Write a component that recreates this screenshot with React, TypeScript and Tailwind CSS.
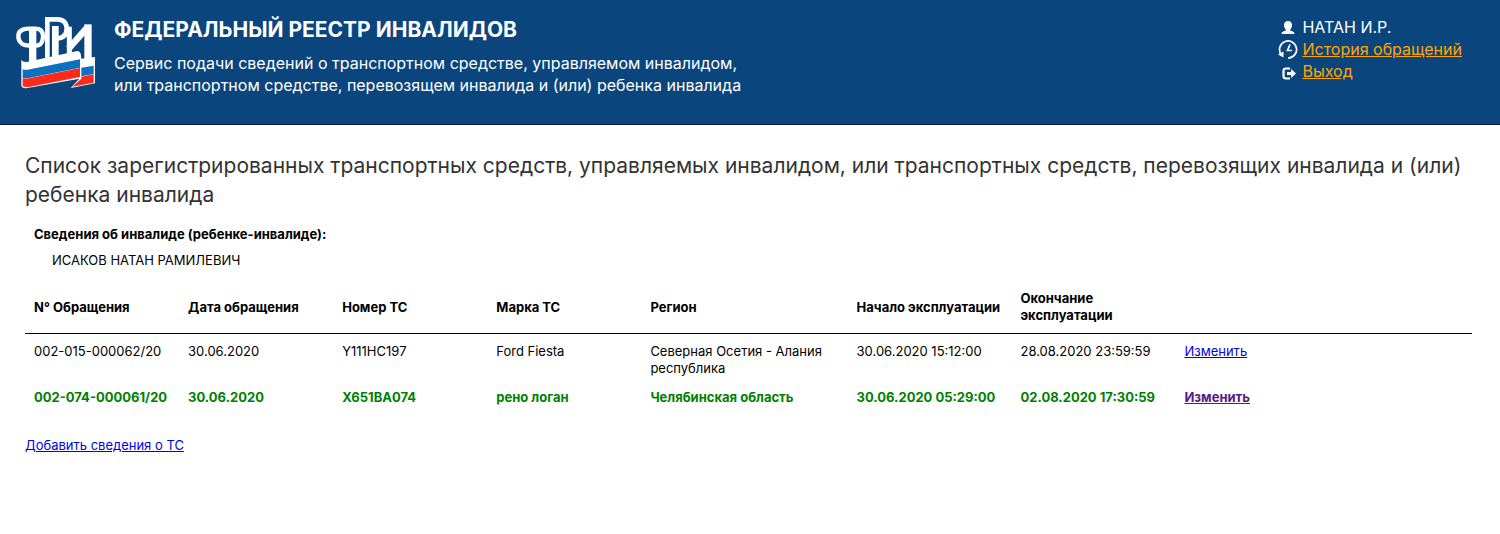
const vehicles = [
  {
    id: '002-015-000062/20',
    date: '30.06.2020',
    plate: 'Y111HC197',
    brand: 'Ford Fiesta',
    region: 'Северная Осетия - Алания республика',
    start: '30.06.2020 15:12:00',
    end: '28.08.2020 23:59:59',
    active: false,
  },
  {
    id: '002-074-000061/20',
    date: '30.06.2020',
    plate: 'X651BA074',
    brand: 'рено логан',
    region: 'Челябинская область',
    start: '30.06.2020 05:29:00',
    end: '02.08.2020 17:30:59',
    active: true,
  },
]

const Logo = () => {
  return (
    <svg viewBox="45 48 243 219" className="h-[73px] w-[81px]" role="img" aria-label="ФРИ">
      {/* flag ribbon */}
      <path d="M64 180Q72 190 90 184L232 153Q244 154 244 176L285 171V250L212 264L238 236L78 265Q68 266 64 258Z" fill="#fff" />
      <path d="M68 208Q76 211 90 208L240 178V203L90 233Q76 236 68 233Z" fill="#0b72c0" />
      <path d="M68 234Q76 237 90 234L240 204V231L90 260Q76 263 68 259Z" fill="#fb2a1a" />
      <path d="M244 203L281 197V222L244 229Z" fill="#0b72c0" />
      <path d="M244 230L281 223V248L217 260L244 236Z" fill="#fb2a1a" />
      {/* monogram */}
      <g fill="none" stroke="#fff">
        <path d="M88 137C66 137 55 125 55 109C55 93 66 86 88 86H106C124 86 129 96 129 109C129 125 122 137 108 137" strokeWidth="13" />
        <path d="M98 82V186" strokeWidth="22" />
        <path d="M142 51V176M142 58H172C190 58 200 68 200 86C200 104 190 115 168 115" strokeWidth="14" />
        <path d="M166 78V170" strokeWidth="20" />
        <path d="M208 80V162" strokeWidth="15" />
        <path d="M206 146L264 80" strokeWidth="20" />
        <path d="M264 73V178" strokeWidth="22" />
      </g>
    </svg>
  )
}

const UserIcon = () => (
  <svg viewBox="0 0 20 20" className="size-5" fill="#fff" aria-hidden="true">
    <path d="M10 4c2.700 0 4 1.700 4 4 0 2-.8 3.600-1.800 4.500v1c1.800.8 4.300 1.200 4.300 3.500H3.500c0-2.300 2.500-2.700 4.300-3.500v-1C6.800 11.600 6 10 6 8c0-2.300 1.300-4 4-4Z" />
  </svg>
)

const HistoryIcon = () => (
  <svg viewBox="0 0 20 20" className="size-5" fill="none" stroke="#fff" strokeWidth="1.700" aria-hidden="true">
    <path d="M3.200 15.500A8.500 8.500 0 1 1 10 19" />
    <path d="M12 5.500 9.500 11.500h4.500" />
    <path d="M0 15.500 5.500 12.500v6Z" fill="#fff" stroke="none" />
  </svg>
)

const LogoutIcon = () => (
  <svg viewBox="0 0 20 20" className="size-5" fill="none" stroke="#fff" strokeWidth="2.200" aria-hidden="true">
    <path d="M12 7.500H8Q5.500 7.500 5.500 10v5q0 2.500 2.500 2.500h4" />
    <path d="M9 11h4V8l5 4.500-5 4.500v-3H9Z" fill="#fff" stroke="none" />
  </svg>
)

const App = () => {
  return (
    <div className="min-h-screen bg-white font-[Inter,sans-serif] text-black">
      <header className="flex items-start justify-between border-b border-[#062040] bg-[#0b457e] pt-4 pr-[38px] pb-7 pl-[15px] text-white">
        <div className="flex gap-[18px]">
          <Logo />
          <div>
            <h1 className="text-[21px] leading-7 font-bold">ФЕДЕРАЛЬНЫЙ РЕЕСТР ИНВАЛИДОВ</h1>
            <p className="mt-2 text-base leading-[22px]">
              Сервис подачи сведений о транспортном средстве, управляемом инвалидом,
              <br />
              или транспортном средстве, перевозящем инвалида и (или) ребенка инвалида
            </p>
          </div>
        </div>
        <ul className="text-base leading-[22px]">
          <li className="flex items-center gap-1">
            <UserIcon />
            НАТАН И.Р.
          </li>
          <li className="flex items-center gap-1">
            <HistoryIcon />
            <a href="#history" className="text-[#ffa500] underline">История обращений</a>
          </li>
          <li className="flex items-center gap-1">
            <LogoutIcon />
            <a href="#logout" className="text-[#ffa500] underline">Выход</a>
          </li>
        </ul>
      </header>

      <main className="pt-[26px] pr-7 pl-[25px] text-[13px] leading-[17px]">
        <h2 className="text-[21px] leading-[29px] text-[#333]">
          Список зарегистрированных транспортных средств, управляемых инвалидом, или транспортных средств, перевозящих
          инвалида и (или) ребенка инвалида
        </h2>

        <section className="mt-[17px] px-[9px]">
          <h3 className="font-bold">Сведения об инвалиде (ребенке-инвалиде):</h3>
          <p className="mt-[9px] pl-[18px]">ИСАКОВ НАТАН РАМИЛЕВИЧ</p>
        </section>

        <table className="mt-3.5 w-full table-fixed border-collapse text-left">
          <colgroup>
            <col className="w-[10.650%]" />
            <col className="w-[10.650%]" />
            <col className="w-[10.650%]" />
            <col className="w-[10.650%]" />
            <col className="w-[14.250%]" />
            <col className="w-[11.330%]" />
            <col className="w-[11.330%]" />
            <col />
          </colgroup>
          <thead>
            <tr className="border-b border-black *:px-[9px] *:pt-[7px] *:pb-[9px] *:font-bold">
              <th>N° Обращения</th>
              <th>Дата обращения</th>
              <th>Номер ТС</th>
              <th>Марка ТС</th>
              <th>Регион</th>
              <th className="whitespace-nowrap">Начало эксплуатации</th>
              <th>Окончание эксплуатации</th>
              <td></td>
            </tr>
          </thead>
          <tbody>
            {vehicles.map((v) => (
              <tr
                key={v.id}
                className={`align-top *:px-[9px] *:pt-[9px] *:pb-[3px] ${v.active ? 'font-bold text-[#008000]' : ''}`}
              >
                <td>{v.id}</td>
                <td>{v.date}</td>
                <td>{v.plate}</td>
                <td>{v.brand}</td>
                <td>{v.region}</td>
                <td className="whitespace-nowrap">{v.start}</td>
                <td className="whitespace-nowrap">{v.end}</td>
                <td>
                  <a href="#edit" className={`underline ${v.active ? 'text-[#551a8b]' : 'text-[#0000ee]'}`}>
                    Изменить
                  </a>
                </td>
              </tr>
            ))}
          </tbody>
        </table>

        <a href="#add" className="mt-7 inline-block text-[#0000ee] underline">
          Добавить сведения о ТС
        </a>
      </main>
    </div>
  )
}

export default App
